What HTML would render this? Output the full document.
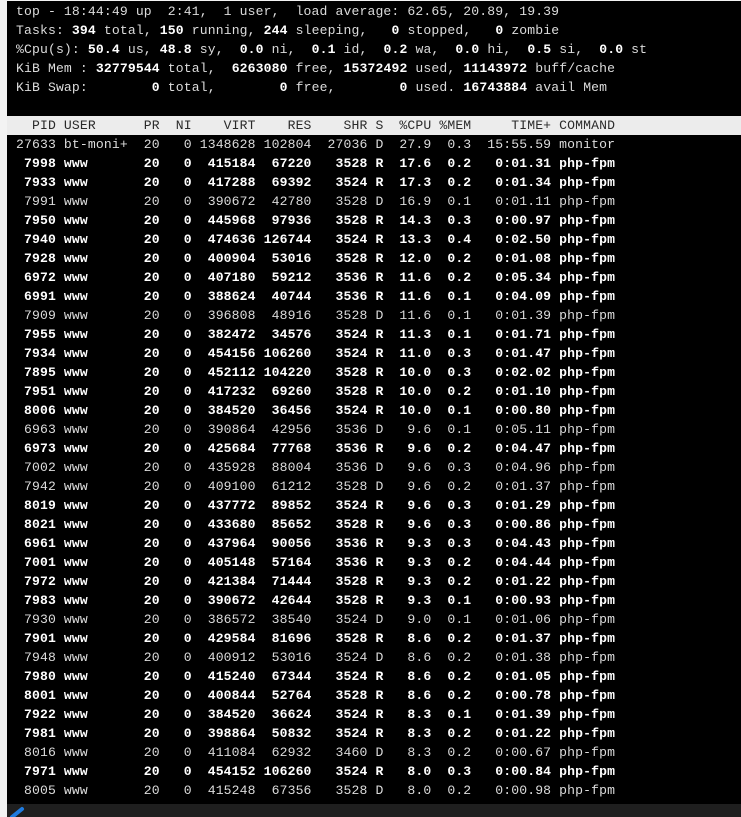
<!DOCTYPE html>
<html><head><meta charset="utf-8"><style>
html,body{margin:0;padding:0;background:#f3f3f3;width:741px;height:817px;overflow:hidden}
#term{position:absolute;left:7px;top:1px;width:734px;height:803px;background:#000}
pre{margin:0;position:absolute;left:9px;top:1px;font-family:"Liberation Mono",monospace;font-size:13.1px;letter-spacing:0.13px;line-height:19px;color:#dcdcdc}
b{color:#fff;font-weight:bold}
.hd{display:block;background:#ececec;color:#2a2a2a;margin-left:-9px;padding-left:9px;width:725px}
#bar{position:absolute;left:7px;top:804px;width:734px;height:13px;background:#1f1f1f}
</style></head><body>
<div id="term"><pre>top - 18:44:49 up  2:41,  1 user,  load average: 62.65, 20.89, 19.39
Tasks: <b>394</b> total, <b>150</b> running, <b>244</b> sleeping,   <b>0</b> stopped,   <b>0</b> zombie
%Cpu(s): <b>50.4</b> us, <b>48.8</b> sy,  <b>0.0</b> ni,  <b>0.1</b> id,  <b>0.2</b> wa,  <b>0.0</b> hi,  <b>0.5</b> si,  <b>0.0</b> st
KiB Mem : <b>32779544</b> total,  <b>6263080</b> free, <b>15372492</b> used, <b>11143972</b> buff/cache
KiB Swap:        <b>0</b> total,        <b>0</b> free,        <b>0</b> used. <b>16743884</b> avail Mem

<span class="hd">  PID USER      PR  NI    VIRT    RES    SHR S  %CPU %MEM     TIME+ COMMAND</span>27633 bt-moni+  20   0 1348628 102804  27036 D  27.9  0.3  15:55.59 monitor
<b> 7998 www       20   0  415184  67220   3528 R  17.6  0.2   0:01.31 php-fpm</b>
<b> 7933 www       20   0  417288  69392   3524 R  17.3  0.2   0:01.34 php-fpm</b>
 7991 www       20   0  390672  42780   3528 D  16.9  0.1   0:01.11 php-fpm
<b> 7950 www       20   0  445968  97936   3528 R  14.3  0.3   0:00.97 php-fpm</b>
<b> 7940 www       20   0  474636 126744   3524 R  13.3  0.4   0:02.50 php-fpm</b>
<b> 7928 www       20   0  400904  53016   3528 R  12.0  0.2   0:01.08 php-fpm</b>
<b> 6972 www       20   0  407180  59212   3536 R  11.6  0.2   0:05.34 php-fpm</b>
<b> 6991 www       20   0  388624  40744   3536 R  11.6  0.1   0:04.09 php-fpm</b>
 7909 www       20   0  396808  48916   3528 D  11.6  0.1   0:01.39 php-fpm
<b> 7955 www       20   0  382472  34576   3524 R  11.3  0.1   0:01.71 php-fpm</b>
<b> 7934 www       20   0  454156 106260   3524 R  11.0  0.3   0:01.47 php-fpm</b>
<b> 7895 www       20   0  452112 104220   3528 R  10.0  0.3   0:02.02 php-fpm</b>
<b> 7951 www       20   0  417232  69260   3528 R  10.0  0.2   0:01.10 php-fpm</b>
<b> 8006 www       20   0  384520  36456   3524 R  10.0  0.1   0:00.80 php-fpm</b>
 6963 www       20   0  390864  42956   3536 D   9.6  0.1   0:05.11 php-fpm
<b> 6973 www       20   0  425684  77768   3536 R   9.6  0.2   0:04.47 php-fpm</b>
 7002 www       20   0  435928  88004   3536 D   9.6  0.3   0:04.96 php-fpm
 7942 www       20   0  409100  61212   3528 D   9.6  0.2   0:01.37 php-fpm
<b> 8019 www       20   0  437772  89852   3524 R   9.6  0.3   0:01.29 php-fpm</b>
<b> 8021 www       20   0  433680  85652   3528 R   9.6  0.3   0:00.86 php-fpm</b>
<b> 6961 www       20   0  437964  90056   3536 R   9.3  0.3   0:04.43 php-fpm</b>
<b> 7001 www       20   0  405148  57164   3536 R   9.3  0.2   0:04.44 php-fpm</b>
<b> 7972 www       20   0  421384  71444   3528 R   9.3  0.2   0:01.22 php-fpm</b>
<b> 7983 www       20   0  390672  42644   3528 R   9.3  0.1   0:00.93 php-fpm</b>
 7930 www       20   0  386572  38540   3524 D   9.0  0.1   0:01.06 php-fpm
<b> 7901 www       20   0  429584  81696   3528 R   8.6  0.2   0:01.37 php-fpm</b>
 7948 www       20   0  400912  53016   3524 D   8.6  0.2   0:01.38 php-fpm
<b> 7980 www       20   0  415240  67344   3524 R   8.6  0.2   0:01.05 php-fpm</b>
<b> 8001 www       20   0  400844  52764   3528 R   8.6  0.2   0:00.78 php-fpm</b>
<b> 7922 www       20   0  384520  36624   3524 R   8.3  0.1   0:01.39 php-fpm</b>
<b> 7981 www       20   0  398864  50832   3524 R   8.3  0.2   0:01.22 php-fpm</b>
 8016 www       20   0  411084  62932   3460 D   8.3  0.2   0:00.67 php-fpm
<b> 7971 www       20   0  454152 106260   3524 R   8.0  0.3   0:00.84 php-fpm</b>
 8005 www       20   0  415248  67356   3528 D   8.0  0.2   0:00.98 php-fpm</pre></div>
<div id="bar"></div>
<svg style="position:absolute;left:8px;top:806px" width="20" height="11" viewBox="0 0 20 11"><path d="M4 11 L14 3" stroke="#1e7be0" stroke-width="4" stroke-linecap="round"/></svg>
</body></html>
